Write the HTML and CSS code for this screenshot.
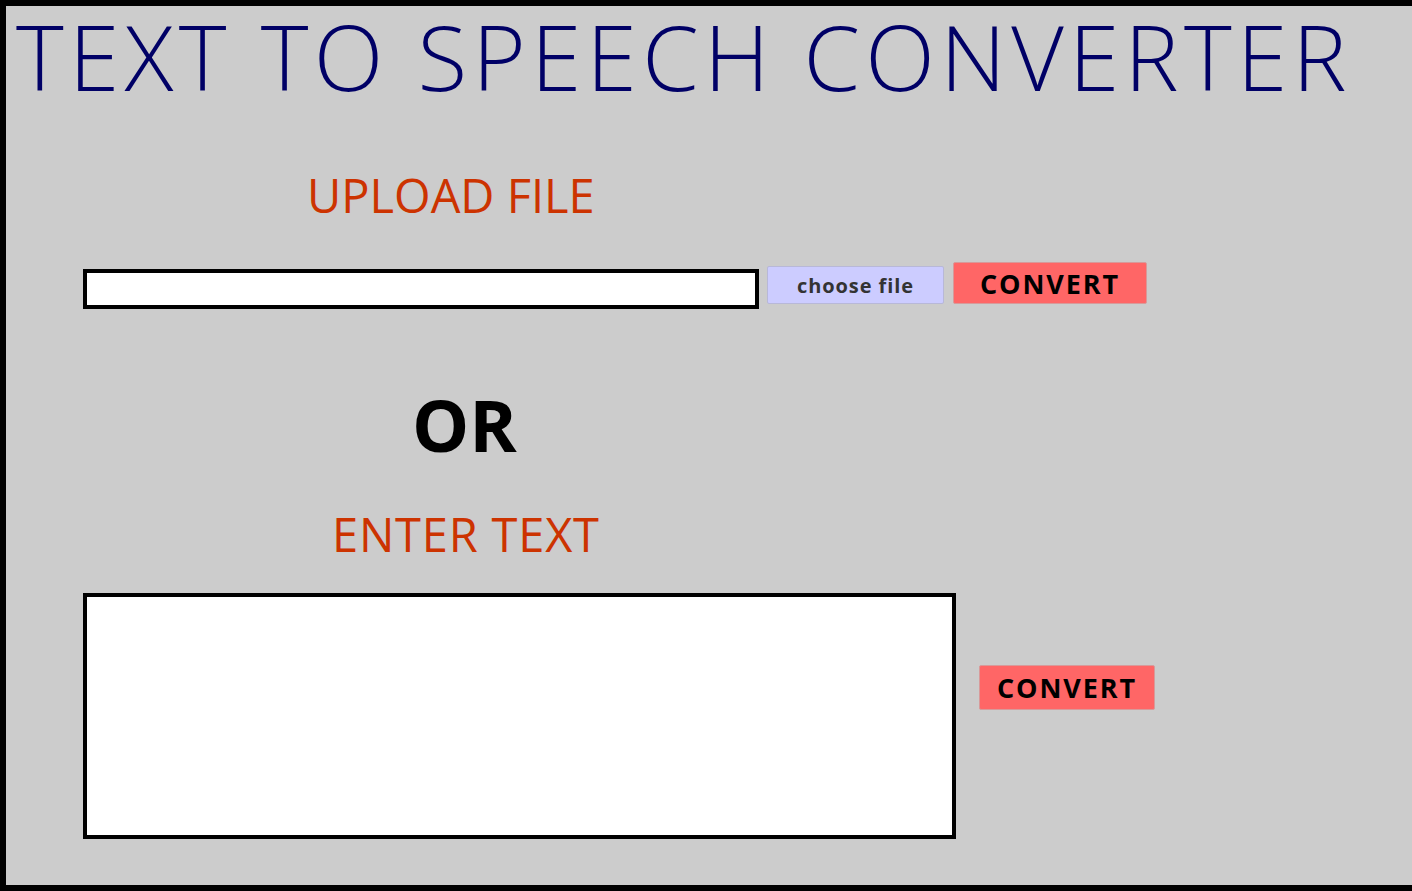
FILE: index.html
```html
<!DOCTYPE html>
<html lang="en">
<head>
<meta charset="utf-8">
<title>Text to Speech Converter</title>
<link rel="stylesheet" href="styles.css">
</head>
<body>
<div class="page">
  <h1 class="title">TEXT TO SPEECH CONVERTER</h1>
  <section class="upload">
    <h2 class="label label-upload">UPLOAD FILE</h2>
    <div class="row row-upload">
      <div class="file-field"></div>
      <button class="choose" type="button">choose file</button>
      <button class="convert convert-file" type="button">CONVERT</button>
    </div>
  </section>
  <div class="or">OR</div>
  <section class="enter">
    <h2 class="label label-text">ENTER TEXT</h2>
    <div class="row row-text">
      <textarea class="text-area"></textarea>
      <button class="convert convert-text" type="button">CONVERT</button>
    </div>
  </section>
</div>
</body>
</html>
```

FILE: styles.css
```css
* { box-sizing: border-box; }
html, body { margin: 0; padding: 0; }
body { background: #cccccc; font-family: "Open Sans", "Liberation Sans", sans-serif; overflow: hidden; }

.page {
  height: 891px;
  border: 6px solid #000;
  border-right: none;
  background: #cccccc;
  padding: 5px 0 0 10px;
}

.title {
  margin: 0;
  font-size: 91px;
  font-weight: 300;
  line-height: 1;
  letter-spacing: 5.3px;
  color: #000066;
  white-space: nowrap;
}

.label {
  margin: 0;
  font-size: 47px;
  font-weight: 400;
  line-height: 1;
  color: #cc3300;
}
.label-upload { margin-top: 70px; padding-left: 291px; }
.label-text { margin-top: 0; padding-left: 316px; letter-spacing: 0.8px; }

.row { display: flex; align-items: flex-start; }
.row-upload { margin-top: 43px; padding-left: 67px; }
.row-text { margin-top: 35px; padding-left: 67px; }

.file-field {
  width: 676px;
  height: 40px;
  margin-top: 7px;
  background: #fff;
  border: 4px solid #000;
}

.choose {
  width: 177px;
  height: 38px;
  margin: 4px 0 0 8px;
  padding: 0;
  background: #ccccff;
  border: 1px solid #b8b8d8;
  border-radius: 2px;
  font-family: inherit;
  font-size: 20px;
  font-weight: 700;
  letter-spacing: 0.9px;
  color: #333;
}

.convert {
  height: 42px;
  padding: 0;
  background: #ff6666;
  border: 1px solid #d89a9a;
  border-radius: 2px;
  font-family: inherit;
  font-size: 27px;
  font-weight: 700;
  letter-spacing: 1.9px;
  color: #000;
}
.convert-file { width: 194px; margin-left: 9px; }
.convert-text { width: 176px; height: 45px; margin: 72px 0 0 23px; }

.or {
  margin-top: 79px;
  padding-left: 396px;
  font-size: 72px;
  font-weight: 700;
  line-height: 1;
  color: #000;
}

.enter { margin-top: 51px; }

.text-area {
  display: block;
  width: 873px;
  height: 246px;
  margin: 0;
  background: #fff;
  border: 4px solid #000;
  resize: none;
}
```
